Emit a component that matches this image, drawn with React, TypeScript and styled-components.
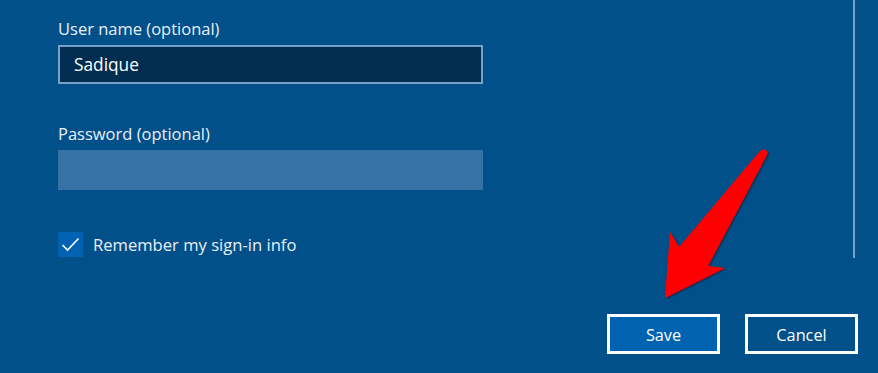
import styled, { createGlobalStyle } from 'styled-components'

const GlobalStyle = createGlobalStyle`
  html, body {
    margin: 0;
    padding: 0;
    background: #02508a;
  }
  body {
    font-family: 'Open Sans', 'Noto Sans', sans-serif;
  }
`

const Page = styled.div`
  position: relative;
  width: 878px;
  height: 373px;
  overflow: hidden;
  background: #02508a;
  box-sizing: border-box;
  padding: 19px 20px 0 58px;
  display: flex;
  flex-direction: column;
`

const Field = styled.div<{ $gap: number }>`
  display: flex;
  flex-direction: column;
  width: 425px;
  margin-bottom: ${({ $gap }) => $gap}px;
`

const Label = styled.label`
  font-size: 16.5px;
  line-height: 20px;
  color: #e8eff6;
  margin-bottom: 6px;
`

const TextBox = styled.div<{ $filled?: boolean }>`
  box-sizing: border-box;
  height: ${({ $filled }) => ($filled ? 39 : 40)}px;
  padding: 0 14px;
  display: flex;
  align-items: center;
  font-size: 17.3px;
  color: #ffffff;
  background: ${({ $filled }) => ($filled ? '#002d50' : '#3672a3')};
  border: ${({ $filled }) => ($filled ? '2px solid #76a1c8' : 'none')};
`

const CheckRow = styled.div`
  display: flex;
  align-items: center;
  gap: 10px;
  height: 25px;
  margin-bottom: 57px;
`

const CheckBox = styled.div`
  width: 25px;
  height: 25px;
  background: #0062b0;
  display: flex;
  align-items: center;
  justify-content: center;
`

const CheckText = styled.span`
  font-size: 16.6px;
  color: #e8eff6;
`

const Buttons = styled.div`
  display: flex;
  justify-content: flex-end;
  gap: 25px;
`

const Button = styled.button<{ $primary?: boolean }>`
  box-sizing: border-box;
  width: 113px;
  height: 40px;
  border: 3px solid #ffffff;
  background: ${({ $primary }) => ($primary ? '#0063b1' : '#02508a')};
  color: #ffffff;
  font-family: inherit;
  font-size: 16.3px;
  padding: 2px 0 0;
`

const ScrollBar = styled.div`
  position: absolute;
  left: 853px;
  top: 0;
  width: 2px;
  height: 258px;
  background: #7aa0c4;
`

const Arrow = styled.svg`
  position: absolute;
  left: 0;
  top: 0;
  pointer-events: none;
`

export default function App() {
  return (
    <>
      <GlobalStyle />
      <Page>
        <Field $gap={40}>
          <Label>User name (optional)</Label>
          <TextBox $filled>Sadique</TextBox>
        </Field>
        <Field $gap={42}>
          <Label>Password (optional)</Label>
          <TextBox />
        </Field>
        <CheckRow>
          <CheckBox>
            <svg width="19" height="15" viewBox="0 0 19 15">
              <path d="M1.5 8 L6.5 13 L17.5 1.5" fill="none" stroke="#fff" strokeWidth="1.6" />
            </svg>
          </CheckBox>
          <CheckText>Remember my sign-in info</CheckText>
        </CheckRow>
        <Buttons>
          <Button $primary>Save</Button>
          <Button>Cancel</Button>
        </Buttons>
        <ScrollBar />
        <Arrow width="878" height="373" viewBox="0 0 878 373">
          <defs>
            <filter id="sh" x="-20%" y="-20%" width="140%" height="140%">
              <feDropShadow dx="1" dy="1" stdDeviation="1" floodColor="#300" floodOpacity="0.6" />
            </filter>
          </defs>
          <path
            d="M760 151 Q765 147 768 153 L708 266 L725 268 L665 298 L670 232 L679 247 Z"
            fill="#ff0000"
            filter="url(#sh)"
          />
        </Arrow>
      </Page>
    </>
  )
}
